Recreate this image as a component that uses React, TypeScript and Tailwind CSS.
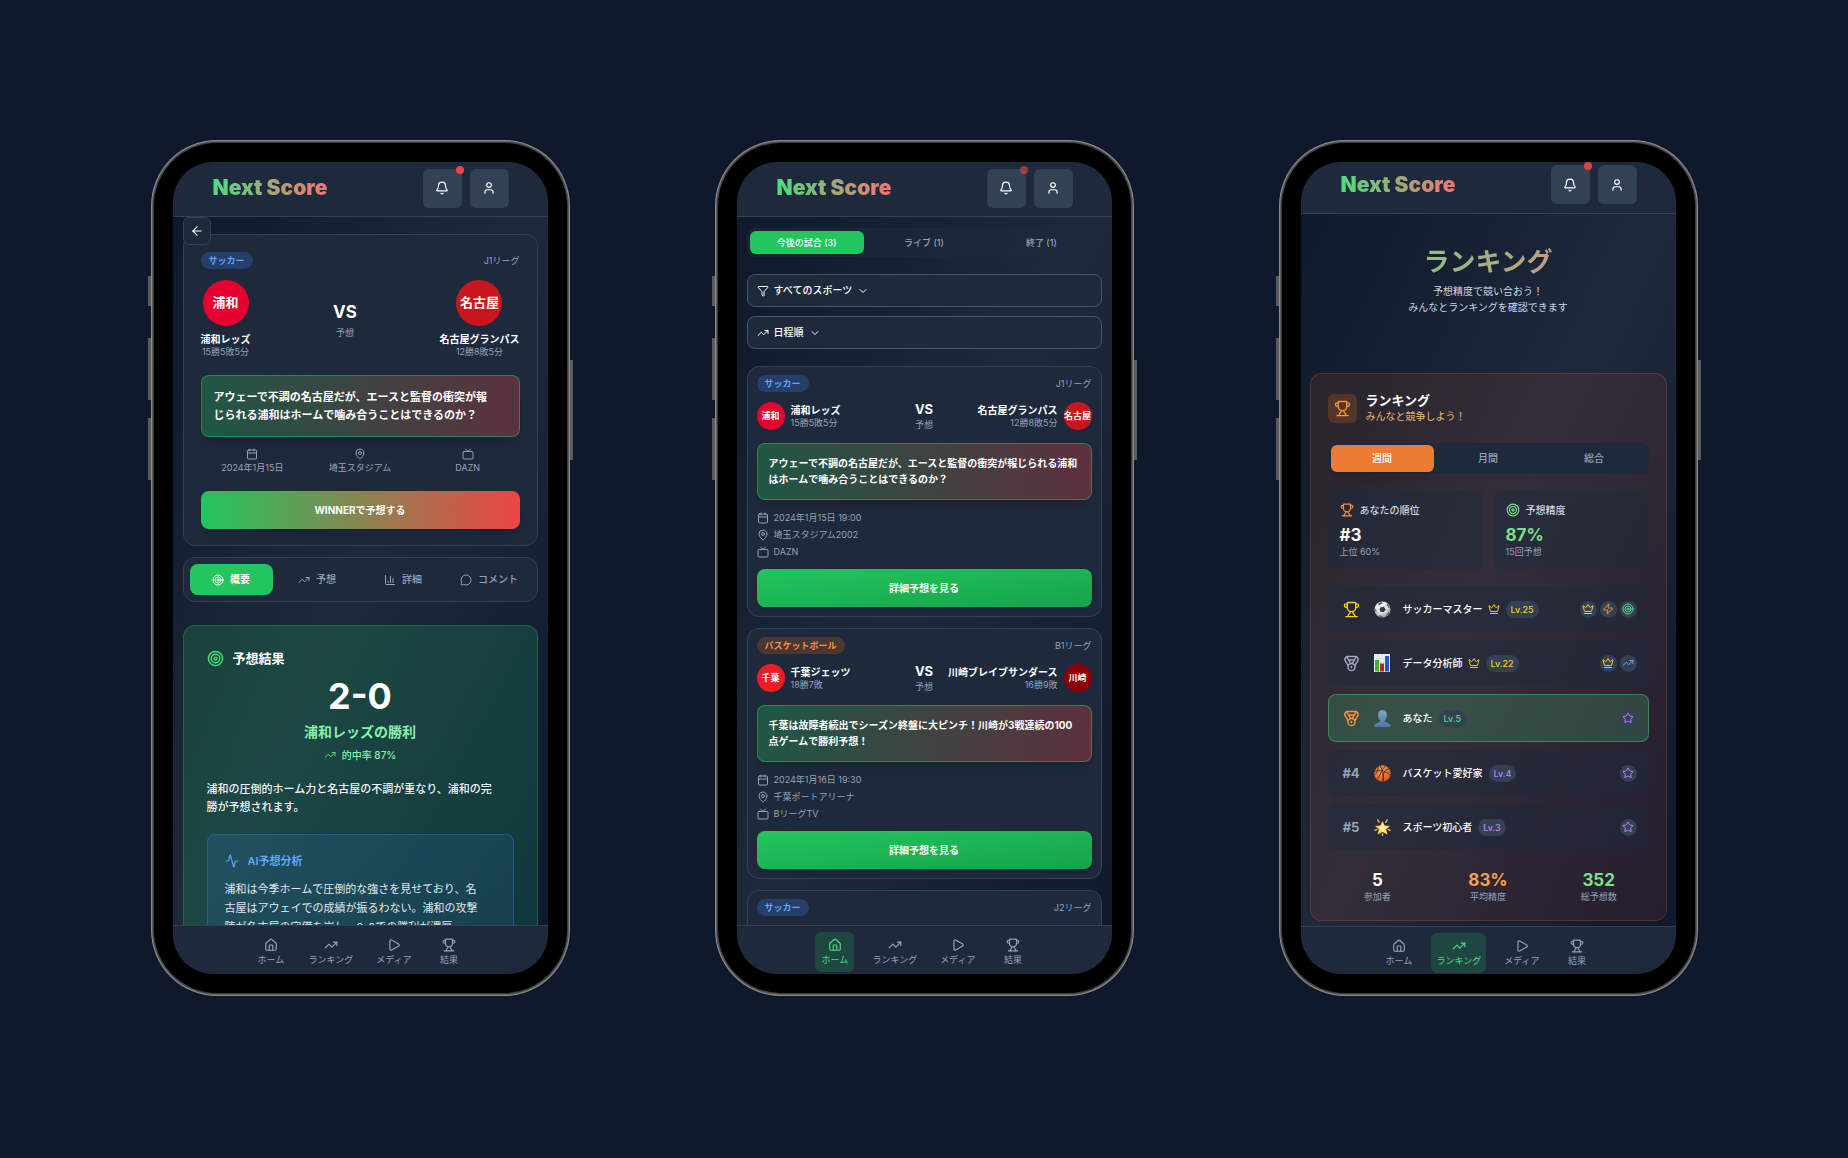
import React from "react";
import {
  Activity, ArrowLeft, Bell, Calendar, ChartColumn, ChevronDown, Crown, Filter, House, MapPin, Medal,
  MessageCircle, Play, Star, Target, TrendingUp, Trophy, Tv, User, Zap,
} from "lucide-react";
import type { LucideIcon } from "lucide-react";

function Phone({ children }: { children: React.ReactNode }) {
  return (
    <div className="relative shrink-0">
      <span className="absolute -left-[3px] top-[136px] h-[30px] w-[3px] bg-[#5b5b5b]" />
      <span className="absolute -left-[3px] top-[198px] h-[62px] w-[3px] bg-[#5b5b5b]" />
      <span className="absolute -left-[3px] top-[278px] h-[62px] w-[3px] bg-[#5b5b5b]" />
      <span className="absolute -right-[3px] top-[220px] h-[100px] w-[3px] bg-[#5b5b5b]" />
      <div className="relative rounded-[66px] bg-[#8c8c8c] p-px">
        <div className="rounded-[65px] bg-[#5a5a5c] p-px">
          <div className="rounded-[64px] bg-[#3c3c3e] p-px">
            <div className="rounded-[63px] bg-black p-[19px]">
              <div className="flex h-[812px] w-[375px] flex-col overflow-hidden rounded-[40px] bg-linear-to-br/srgb from-[#0f172a] via-[#1e293b] to-[#0f172a]">
                {children}
              </div>
            </div>
          </div>
        </div>
      </div>
    </div>
  );
}

function Header({ compact, dot }: { compact?: boolean; dot: string }) {
  return (
    <header className={`flex shrink-0 items-center justify-between border-b border-[#334155] bg-[#1e293b] pr-[39px] pl-10 ${compact ? "h-[52px] pb-[6px]" : "h-[55px] pb-[2px]"}`}>
      <h1 className="bg-linear-to-r/srgb from-[#4ade80] to-[#f87171] bg-clip-text text-[21px] leading-7 font-black text-transparent">
        Next Score
      </h1>
      <div className="flex gap-2">
        <button aria-label="通知" className="relative flex size-[39px] items-center justify-center rounded-md bg-[#334155] text-white">
          <Bell size={14} />
          <span className={`absolute -top-[3px] -right-[2px] size-2 rounded-full ${dot}`} />
        </button>
        <button aria-label="プロフィール" className="flex size-[39px] items-center justify-center rounded-md bg-[#334155] text-white">
          <User size={14} />
        </button>
      </div>
    </header>
  );
}

const navItems: { icon: LucideIcon; label: string }[] = [
  { icon: House, label: "ホーム" },
  { icon: TrendingUp, label: "ランキング" },
  { icon: Play, label: "メディア" },
  { icon: Trophy, label: "結果" },
];

function BottomNav({ active, compact }: { active?: string; compact?: boolean }) {
  return (
    <nav className={`flex shrink-0 justify-center gap-[13px] border-t border-[#334155] bg-[#1e293b] pt-[6px] ${compact ? "h-12" : "h-[49px]"}`}>
      {navItems.map(({ icon: Icon, label }) => (
        <button
          key={label}
          className={`flex h-10 min-w-[39px] flex-col items-center rounded-md px-[5px] pt-[6px] ${label === active ? "bg-[#22c55e]/20 text-[#4ade80]" : "text-[#94a3b8]"}`}
        >
          <Icon size={14} />
          <span className="mt-[2px] text-[9px] leading-3">{label}</span>
        </button>
      ))}
    </nav>
  );
}

function SportBadge({ sport }: { sport: string }) {
  const tone = sport === "サッカー" ? "bg-[#3b82f6]/25 text-[#60a5fa]" : "bg-[#f97316]/20 text-[#fb923c]";
  return <span className={`rounded-full px-2 text-[9px] leading-[17px] font-semibold ${tone}`}>{sport}</span>;
}

/* ---------- Match detail ---------- */

function DetailTeam({ short, name, record, color }: { short: string; name: string; record: string; color: string }) {
  return (
    <div className="flex flex-col items-center">
      <span className={`flex size-[46px] items-center justify-center rounded-full text-[13px] font-bold ${color}`}>{short}</span>
      <span className="mt-[6px] text-[10px] leading-[14px] font-bold">{name}</span>
      <span className="text-[9px] leading-3 text-[#94a3b8]">{record}</span>
    </div>
  );
}

function DetailScreen() {
  const facts: [LucideIcon, string][] = [
    [Calendar, "2024年1月15日"],
    [MapPin, "埼玉スタジアム"],
    [Tv, "DAZN"],
  ];
  const tabs: [LucideIcon, string][] = [
    [Target, "概要"],
    [TrendingUp, "予想"],
    [ChartColumn, "詳細"],
    [MessageCircle, "コメント"],
  ];
  return (
    <Phone>
      <Header dot="bg-[#ef4444]" />
      <main className="relative min-h-0 flex-1 overflow-hidden px-[10px] pt-[17px]">
        <button aria-label="戻る" className="absolute top-0 left-[10px] flex size-7 items-center justify-center rounded-md border border-[#334155] bg-[#1e293b]">
          <ArrowLeft size={14} />
        </button>
        <section className="rounded-xl border border-[#334155] bg-[#1e293b] px-[17px] pt-[17px] pb-4">
          <div className="flex items-center justify-between">
            <SportBadge sport="サッカー" />
            <span className="text-[9px] leading-[17px] text-[#94a3b8]">J1リーグ</span>
          </div>
          <div className="mt-[11px] flex items-center justify-between">
            <DetailTeam short="浦和" name="浦和レッズ" record="15勝5敗5分" color="bg-[#e6002d]" />
            <div className="flex flex-col items-center pt-[2px]">
              <span className="text-[17px] leading-5 font-bold">VS</span>
              <span className="mt-[5px] text-[9px] leading-3 text-[#94a3b8]">予想</span>
            </div>
            <DetailTeam short="名古屋" name="名古屋グランパス" record="12勝8敗5分" color="bg-[#c8161d]" />
          </div>
          <p className="mt-[17px] rounded-lg border border-[#22c55e]/50 bg-linear-to-r/srgb from-[#22c55e]/30 to-[#ef4444]/30 p-3 text-[11px] leading-[18px] font-bold shadow-lg">
            アウェーで不調の名古屋だが、エースと監督の衝突が報
            <br />
            じられる浦和はホームで噛み合うことはできるのか？
          </p>
          <ul className="mt-[11px] grid grid-cols-3 gap-1 text-[#94a3b8]">
            {facts.map(([Icon, label]) => (
              <li key={label} className="flex flex-col items-center gap-[2px] text-[9px] leading-3">
                <Icon size={12} />
                {label}
              </li>
            ))}
          </ul>
          <button className="mt-[17px] h-[38px] w-full rounded-lg bg-linear-to-r/srgb from-[#22c55e] to-[#ef4444] text-[10px] font-bold shadow-lg">
            WINNERで予想する
          </button>
        </section>
        <div role="tablist" className="mt-[11px] grid h-[45px] grid-cols-4 gap-[3px] rounded-xl border border-[#334155] bg-[#1e293b] p-[6px]">
          {tabs.map(([Icon, label], i) => (
            <button
              key={label}
              role="tab"
              aria-selected={i === 0}
              className={`flex items-center justify-center gap-[6px] rounded-lg text-[10px] ${i === 0 ? "bg-[#22c55e] font-bold" : "font-medium text-[#94a3b8]"}`}
            >
              <Icon size={12} />
              {label}
            </button>
          ))}
        </div>
        <section className="mt-[23px] rounded-xl border border-[#22c55e]/30 bg-linear-to-br/srgb from-[#22c55e]/20 to-[#10b981]/20 px-[23px] pt-[22px]">
          <h2 className="flex items-center gap-[9px] text-[13px] leading-5 font-bold">
            <Target size={17} className="text-[#4ade80]" />
            予想結果
          </h2>
          <div className="text-center">
            <p className="mt-2 text-[36px] leading-10 font-bold">2-0</p>
            <p className="mt-[6px] text-[14px] leading-5 font-bold text-[#86efac]">浦和レッズの勝利</p>
            <p className="mt-[5px] flex items-center justify-center gap-[6px] text-[10px] leading-4 font-medium text-[#86efac]">
              <TrendingUp size={12} className="text-[#4ade80]" />
              的中率 87%
            </p>
          </div>
          <p className="mt-[17px] text-[11px] leading-[18px] font-medium text-slate-100">
            浦和の圧倒的ホーム力と名古屋の不調が重なり、浦和の完
            <br />
            勝が予想されます。
          </p>
          <div className="mt-[18px] rounded-lg border border-[#3b82f6]/35 bg-linear-to-br/srgb from-[#3b82f6]/15 to-[#3b82f6]/10 px-[17px] pt-[17px]">
            <h3 className="flex items-center gap-[9px] text-[11px] leading-[18px] font-semibold text-[#60a5fa]">
              <Activity size={14} />
              AI予想分析
            </h3>
            <p className="mt-[10px] text-[11px] leading-[19px] whitespace-nowrap text-slate-200">
              浦和は今季ホームで圧倒的な強さを見せており、名
              <br />
              古屋はアウェイでの成績が振るわない。浦和の攻撃
              <br />
              陣が名古屋の守備を崩し、2-0での勝利が濃厚。
            </p>
          </div>
        </section>
      </main>
      <BottomNav />
    </Phone>
  );
}

/* ---------- Match list ---------- */

type Team = { short: string; name: string; record: string; color: string };
type Match = { sport: string; league: string; home: Team; away: Team; headline: [string, string]; date: string; venue: string; tv: string };

const matches: Match[] = [
  {
    sport: "サッカー",
    league: "J1リーグ",
    home: { short: "浦和", name: "浦和レッズ", record: "15勝5敗5分", color: "bg-[#e6002d]" },
    away: { short: "名古屋", name: "名古屋グランパス", record: "12勝8敗5分", color: "bg-[#c8161d]" },
    headline: ["アウェーで不調の名古屋だが、エースと監督の衝突が報じられる浦和", "はホームで噛み合うことはできるのか？"],
    date: "2024年1月15日 19:00",
    venue: "埼玉スタジアム2002",
    tv: "DAZN",
  },
  {
    sport: "バスケットボール",
    league: "B1リーグ",
    home: { short: "千葉", name: "千葉ジェッツ", record: "18勝7敗", color: "bg-[#ed1c24]" },
    away: { short: "川崎", name: "川崎ブレイブサンダース", record: "16勝9敗", color: "bg-[#8b0000]" },
    headline: ["千葉は故障者続出でシーズン終盤に大ピンチ！川崎が3戦連続の100", "点ゲームで勝利予想！"],
    date: "2024年1月16日 19:30",
    venue: "千葉ポートアリーナ",
    tv: "BリーグTV",
  },
];

function ListTeam({ team, away }: { team: Team; away?: boolean }) {
  return (
    <div className={`flex flex-1 items-center gap-[6px] ${away ? "flex-row-reverse text-right" : ""}`}>
      <span className={`flex size-7 shrink-0 items-center justify-center rounded-full text-[9px] font-bold whitespace-nowrap ${team.color}`}>{team.short}</span>
      <div className="whitespace-nowrap">
        <p className="text-[10px] leading-[14px] font-bold">{team.name}</p>
        <p className="text-[9px] leading-3 text-[#94a3b8]">{team.record}</p>
      </div>
    </div>
  );
}

function MatchCard({ match }: { match: Match }) {
  const facts: [LucideIcon, string][] = [
    [Calendar, match.date],
    [MapPin, match.venue],
    [Tv, match.tv],
  ];
  return (
    <article className="rounded-xl border border-[#334155] bg-[#1e293b] px-[9px] pt-2 pb-[9px]">
      <div className="flex items-center justify-between">
        <SportBadge sport={match.sport} />
        <span className="text-[9px] leading-[17px] text-[#94a3b8]">{match.league}</span>
      </div>
      <div className="mt-[9px] flex items-center">
        <ListTeam team={match.home} />
        <div className="flex shrink-0 flex-col items-center">
          <span className="text-[13px] leading-4 font-bold">VS</span>
          <span className="mt-[2px] text-[9px] leading-3 text-[#94a3b8]">予想</span>
        </div>
        <ListTeam team={match.away} away />
      </div>
      <p className="mt-3 rounded-lg border border-[#22c55e]/50 bg-linear-to-r/srgb from-[#22c55e]/30 to-[#ef4444]/30 px-[11px] pt-[11px] pb-3 text-[10px] leading-4 font-bold whitespace-nowrap shadow-lg">
        {match.headline[0]}
        <br />
        {match.headline[1]}
      </p>
      <ul className="mt-[9px] text-[#94a3b8]">
        {facts.map(([Icon, label]) => (
          <li key={label} className="flex items-center gap-[5px] text-[9px] leading-[17px]">
            <Icon size={12} />
            {label}
          </li>
        ))}
      </ul>
      <button className="mt-[9px] h-[38px] w-full rounded-lg bg-linear-to-br/srgb from-[#22c55e] to-[#16a34a] text-[10px] font-bold shadow-md">
        詳細予想を見る
      </button>
    </article>
  );
}

function ListScreen() {
  const tabs = ["今後の試合 (3)", "ライブ (1)", "終了 (1)"];
  const filters: [LucideIcon, string][] = [
    [Filter, "すべてのスポーツ"],
    [TrendingUp, "日程順"],
  ];
  return (
    <Phone>
      <Header dot="bg-[#ef4444]/60" />
      <main className="min-h-0 flex-1 overflow-hidden px-[10px] pt-[11px]">
        <div role="tablist" className="grid h-[29px] grid-cols-3 gap-[3px] rounded-lg bg-[#1e293b]/60 p-[3px]">
          {tabs.map((label, i) => (
            <button
              key={label}
              role="tab"
              aria-selected={i === 0}
              className={`rounded-md text-[9px] font-medium ${i === 0 ? "bg-[#22c55e]" : "text-[#94a3b8]"}`}
            >
              {label}
            </button>
          ))}
        </div>
        <div className="mt-[17px] flex flex-col gap-[9px]">
          {filters.map(([Icon, label]) => (
            <button key={label} className="flex h-[33px] items-center gap-[5px] rounded-lg border border-[#475569] bg-[#1e293b] px-[9px] text-[10px] font-medium">
              <Icon size={12} />
              {label}
              <ChevronDown size={12} />
            </button>
          ))}
        </div>
        <div className="mt-[17px] flex flex-col gap-[11px]">
          {matches.map((m) => (
            <MatchCard key={m.league} match={m} />
          ))}
          <article className="h-[250px] rounded-xl border border-[#334155] bg-[#1e293b] px-[9px] pt-2">
            <div className="flex items-center justify-between">
              <SportBadge sport="サッカー" />
              <span className="text-[9px] leading-[17px] text-[#94a3b8]">J2リーグ</span>
            </div>
          </article>
        </div>
      </main>
      <BottomNav active="ホーム" />
    </Phone>
  );
}

/* ---------- Ranking ---------- */

function SoccerBall() {
  return (
    <svg viewBox="0 0 36 36" className="size-[17px]" aria-hidden="true">
      <defs>
        <radialGradient id="soccer" cx="0.4" cy="0.3" r="0.75">
          <stop offset="0" stopColor="#fff" />
          <stop offset="0.6" stopColor="#ddd" />
          <stop offset="1" stopColor="#8a8a8a" />
        </radialGradient>
      </defs>
      <circle cx="18" cy="18" r="17" fill="url(#soccer)" />
      <path d="M14 13l7-1 4 6-5 6-7-2-1-5z" fill="#3a3a3c" />
      <path d="M10 4l6-2 2 3-5 3-4 1zM28 5l4 5 2 6-4-3-3-5zM2 16l3 3 0 6-2-2zM9 30l6 1 4 3-5 0zM31 24l2-2-2 6-5 4 1-4z" fill="#5a5a5c" />
      <path d="M14 13l-2-4M21 12l6-4M25 18l5 4M20 24l-1 7M13 22l-7 4M12 17l-7 2" stroke="#a5a5a5" strokeWidth="1" fill="none" />
    </svg>
  );
}

function BarChart() {
  return (
    <svg viewBox="0 0 32 36" className="h-[18px] w-4" aria-hidden="true">
      <rect width="32" height="36" fill="#e9f0f6" />
      <path d="M0 9h32M0 18h32M0 27h32M8 0v36M16 0v36M24 0v36" stroke="#c3d2de" strokeWidth="1" />
      <rect x="2" y="12" width="8" height="23" fill="#3fb52e" />
      <rect x="12" y="19" width="8" height="16" fill="#c3211c" />
      <rect x="22" y="4" width="8" height="31" fill="#2557c9" />
    </svg>
  );
}

function Silhouette() {
  return (
    <svg viewBox="0 0 36 36" className="size-[17px]" aria-hidden="true">
      <defs>
        <linearGradient id="bust" x1="0" y1="0" x2="0" y2="1">
          <stop offset="0" stopColor="#7fa3c6" />
          <stop offset="1" stopColor="#4a78a8" />
        </linearGradient>
      </defs>
      <path d="M18 0c6 0 9.500 4.500 9.500 10.500 0 5-2 8.500-4.500 11v3c1 2 12 3 13 11.500H0c1-8.500 12-9.500 13-11.500v-3c-2.500-2.500-4.500-6-4.500-11C8.500 4.500 12 0 18 0z" fill="url(#bust)" />
    </svg>
  );
}

function Basketball() {
  return (
    <svg viewBox="0 0 36 36" className="size-[17px]" aria-hidden="true">
      <defs>
        <radialGradient id="basket" cx="0.4" cy="0.3" r="0.8">
          <stop offset="0" stopColor="#f79a55" />
          <stop offset="0.7" stopColor="#dd6a2a" />
          <stop offset="1" stopColor="#a8451a" />
        </radialGradient>
      </defs>
      <circle cx="18" cy="18" r="17.500" fill="url(#basket)" />
      <path d="M2 13c12-3 24 0 32 9M13 1c5 9 8 22 6 34M24 2c-7 7-10 18-17 29M31 8c-9 3-14 12-11 27M1 21c5-4 8-10 8-18" stroke="#3a1c10" strokeWidth="1.600" fill="none" />
    </svg>
  );
}

function GlowingStar() {
  return (
    <svg viewBox="0 0 36 36" className="size-[17px]" aria-hidden="true">
      <path d="M18 4l4.500 9.500 11.500 1.200-8.300 7L28.500 33 18 27.300 7.500 33l2.800-11.300-8.300-7 11.500-1.200z" fill="#fbd34b" />
      <path d="M18 8l3.300 8 8.200.7-6.200 5L25 29l-7-4-6 3 2-7-5-4.500 6-.5z" fill="#fff0a0" />
      <path d="M8 2l3 5M28 2l-3 5M2 24l4-2M34 24l-4-2M18 31v4" stroke="#f6b73c" strokeWidth="3" strokeLinecap="round" />
    </svg>
  );
}

type Award = "crown" | "zap" | "target" | "trend" | "star";

const awardIcons: Record<Award, { icon: LucideIcon; color: string }> = {
  crown: { icon: Crown, color: "text-[#facc15]" },
  zap: { icon: Zap, color: "text-[#fb923c]" },
  target: { icon: Target, color: "text-[#4ade80]" },
  trend: { icon: TrendingUp, color: "text-[#60a5fa]" },
  star: { icon: Star, color: "text-[#c084fc]" },
};

type Player = { rank: React.ReactNode; avatar: React.ReactNode; name: string; level: string; tone: string; crown?: boolean; me?: boolean; awards: Award[] };

const players: Player[] = [
  { rank: <Trophy size={17} className="text-[#facc15]" />, avatar: <SoccerBall />, name: "サッカーマスター", level: "Lv.25", tone: "text-[#facc15]", crown: true, awards: ["crown", "zap", "target"] },
  { rank: <Medal size={17} className="text-[#a3a8b8]" />, avatar: <BarChart />, name: "データ分析師", level: "Lv.22", tone: "text-[#facc15]", crown: true, awards: ["crown", "trend"] },
  { rank: <Medal size={17} className="text-[#fb923c]" />, avatar: <Silhouette />, name: "あなた", level: "Lv.5", tone: "text-[#4ade80]", me: true, awards: ["star"] },
  { rank: "#4", avatar: <Basketball />, name: "バスケット愛好家", level: "Lv.4", tone: "text-[#c084fc]", awards: ["star"] },
  { rank: "#5", avatar: <GlowingStar />, name: "スポーツ初心者", level: "Lv.3", tone: "text-[#c084fc]", awards: ["star"] },
];

function PlayerRow({ player }: { player: Player }) {
  return (
    <li className={`flex items-center rounded-lg ${player.me ? "h-12 border border-[#4ade80]/40 bg-[#4ade80]/20 px-[11px]" : "h-[46px] bg-[#1e293b]/50 px-3"}`}>
      <span className="flex w-[23px] shrink-0 justify-center text-[13px] leading-[18px] font-bold text-[#94a3b8]">{player.rank}</span>
      <span className="ml-[11px] flex w-[17px] shrink-0 justify-center">{player.avatar}</span>
      <span className="ml-3 text-[10px] leading-[17px] font-medium">{player.name}</span>
      {player.crown && <Crown size={12} className="ml-[5px] shrink-0 text-[#facc15]" />}
      <span className={`ml-[6px] rounded-full bg-[#334155] px-[5px] text-[9px] leading-[17px] font-medium ${player.tone}`}>{player.level}</span>
      <span className="ml-auto flex gap-[3px]">
        {player.awards.map((a) => {
          const { icon: Icon, color } = awardIcons[a];
          return (
            <span key={a} className="flex size-[17px] items-center justify-center rounded-full bg-[#334155]">
              <Icon size={12} className={color} />
            </span>
          );
        })}
      </span>
    </li>
  );
}

function RankingScreen() {
  const totals = [
    { value: "5", label: "参加者", color: "text-white" },
    { value: "83%", label: "平均精度", color: "text-[#f9a050]" },
    { value: "352", label: "総予想数", color: "text-[#7ce08a]" },
  ];
  return (
    <Phone>
      <Header compact dot="bg-[#ef4444]/90" />
      <main className="min-h-0 flex-1 overflow-hidden px-[9px]">
        <div className="h-[159px] pt-[30px] text-center">
          <h2 className="bg-linear-to-r/srgb from-[#5fdc88] to-[#f0807a] bg-clip-text text-[26px] leading-9 font-semibold text-transparent">ランキング</h2>
          <p className="mt-[3px] text-[10px] leading-4 text-[#cbd5e1]">
            予想精度で競い合おう！
            <br />
            みんなとランキングを確認できます
          </p>
        </div>
        <section className="rounded-xl border border-[#f97316]/20 bg-linear-to-br/srgb from-[#f97316]/10 to-[#ef4444]/10 px-[17px] pt-[18px] pb-[17px]">
          <div className="flex items-center gap-[9px]">
            <span className="flex size-[29px] items-center justify-center rounded-md bg-[#f97316]/20 text-[#fb923c]">
              <Trophy size={17} />
            </span>
            <div>
              <h3 className="text-[13px] leading-4 font-bold">ランキング</h3>
              <p className="text-[10px] leading-4 text-[#f0b878]">みんなと競争しよう！</p>
            </div>
          </div>
          <div role="tablist" className="mt-[19px] grid h-[31px] grid-cols-3 gap-[3px] rounded-lg bg-[#1e293b] px-[3px] py-[2px]">
            {["週間", "月間", "総合"].map((label, i) => (
              <button
                key={label}
                role="tab"
                aria-selected={i === 0}
                className={`rounded-md text-[10px] font-medium ${i === 0 ? "bg-[#ec7c34] shadow-lg" : "text-[#94a3b8]"}`}
              >
                {label}
              </button>
            ))}
          </div>
          <div className="mt-[17px] grid grid-cols-2 gap-[11px]">
            <div className="rounded-lg bg-[#1e293b]/50 px-3 pt-3 pb-[11px]">
              <p className="flex items-center gap-[6px] text-[10px] leading-[14px] font-medium text-[#cbd5e1]">
                <Trophy size={14} className="text-[#fb923c]" />
                あなたの順位
              </p>
              <p className="mt-[7px] text-[17px] leading-[22px] font-bold">#3</p>
              <p className="text-[9px] leading-3 text-[#94a3b8]">上位 60%</p>
            </div>
            <div className="rounded-lg bg-[#1e293b]/50 px-3 pt-3 pb-[11px]">
              <p className="flex items-center gap-[6px] text-[10px] leading-[14px] font-medium text-[#cbd5e1]">
                <Target size={14} className="text-[#7ce08a]" />
                予想精度
              </p>
              <p className="mt-[7px] text-[17px] leading-[22px] font-bold text-[#7ce08a]">87%</p>
              <p className="text-[9px] leading-3 text-[#94a3b8]">15回予想</p>
            </div>
          </div>
          <ol className="mt-[17px] flex flex-col gap-2">
            {players.map((p) => (
              <PlayerRow key={p.name} player={p} />
            ))}
          </ol>
          <dl className="mt-[19px] grid grid-cols-3 gap-[11px] text-center">
            {totals.map(({ value, label, color }) => (
              <div key={label} className="flex flex-col-reverse">
                <dt className="text-[9px] leading-3 text-[#94a3b8]">{label}</dt>
                <dd className={`text-[17px] leading-[22px] font-bold ${color}`}>{value}</dd>
              </div>
            ))}
          </dl>
        </section>
      </main>
      <BottomNav active="ランキング" compact />
    </Phone>
  );
}

export default function App() {
  return (
    <div className="flex min-h-screen items-center justify-center gap-[145px] bg-[#10192c] pt-10 pb-[62px] font-['Inter','Noto_Sans_CJK_JP',sans-serif] text-white">
      <DetailScreen />
      <ListScreen />
      <RankingScreen />
    </div>
  );
}
